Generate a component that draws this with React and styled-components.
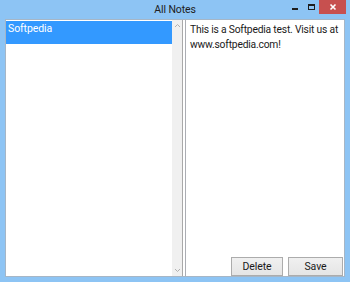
import React from "react";
import styled, { createGlobalStyle } from "styled-components";

const FONT = `Roboto, "Noto Sans", sans-serif`;

const Global = createGlobalStyle`
  html, body { margin: 0; padding: 0; }
  body { width: 350px; height: 282px; overflow: hidden; font-family: ${FONT}; }
`;

const Window = styled.div`
  width: 350px;
  height: 282px;
  box-sizing: border-box;
  background: #8dc4f4;
  display: flex;
  flex-direction: column;
  padding: 0 5px 5px 5px;
`;

const TitleBar = styled.div`
  height: 19px;
  flex: none;
  position: relative;
  display: flex;
  align-items: center;
  justify-content: center;
`;

const Title = styled.div`
  font-size: 10.5px;
  letter-spacing: -0.1px;
  color: #202020;
  line-height: 19px;
`;

const Controls = styled.div`
  position: absolute;
  right: -1px;
  top: 0;
  display: flex;
  align-items: flex-start;
  height: 14px;
`;

const CtrlBtn = styled.div`
  width: ${(p) => p.$w}px;
  height: 14px;
  display: flex;
  align-items: center;
  justify-content: center;
  background: ${(p) => p.$bg || "transparent"};
`;

const Client = styled.div`
  flex: 1;
  display: flex;
  border: 1px solid #a6b6c6;
  background: #ffffff;
  min-height: 0;
`;

const ListBox = styled.div`
  width: 177px;
  flex: none;
  display: flex;
  border-right: 1px solid #a9a9a9;
  box-sizing: border-box;
`;

const ListItems = styled.div`
  flex: 1;
  padding: 1px 0 0 0;
`;

const ListItem = styled.div`
  height: 23px;
  line-height: 15px;
  padding-left: 2px;
  font-size: 10.5px;
  letter-spacing: -0.1px;
  color: ${(p) => (p.$selected ? "#ffffff" : "#000")};
  background: ${(p) => (p.$selected ? "#3399ff" : "transparent")};
`;

const ScrollBar = styled.div`
  width: 10px;
  flex: none;
  background: #f0f0f0;
  display: flex;
  flex-direction: column;
  justify-content: space-between;
  align-items: center;
  padding: 3px 0 3px;
  box-sizing: border-box;
`;

const Gap = styled.div`
  width: 2px;
  flex: none;
`;

const EditorPane = styled.div`
  flex: 1;
  display: flex;
  flex-direction: column;
  border-left: 1px solid #abadb3;
`;

const NoteText = styled.div`
  flex: 1;
  padding: 2px 3px 2px 4px;
  font-size: 10.3px;
  letter-spacing: -0.2px;
  line-height: 15px;
  color: #1a1a1a;
`;

const ButtonRow = styled.div`
  display: flex;
  justify-content: flex-end;
  gap: 5px;
  padding: 0 1px 0 0;
`;

const Button = styled.button`
  width: ${(p) => p.$w}px;
  height: 19px;
  box-sizing: border-box;
  border: 1px solid #acacac;
  background: linear-gradient(#f0f0f0, #e5e5e5);
  font-family: ${FONT};
  font-size: 10.5px;
  letter-spacing: -0.1px;
  color: #1a1a1a;
  padding: 0;
  line-height: 16px;
`;

export default function App() {
  return (
    <>
      <Global />
      <Window>
        <TitleBar>
          <Title>All Notes</Title>
          <Controls>
            <CtrlBtn $w={16}>
              <svg width="8" height="8" viewBox="0 0 8 8">
                <rect x="1" y="5" width="6" height="2" fill="#1e1e1e" />
              </svg>
            </CtrlBtn>
            <CtrlBtn $w={16}>
              <svg width="9" height="8" viewBox="0 0 9 8">
                <rect x="1.5" y="1.5" width="6" height="5" fill="none" stroke="#1e1e1e" strokeWidth="1" />
                <rect x="1" y="1" width="7" height="2" fill="#1e1e1e" />
              </svg>
            </CtrlBtn>
            <CtrlBtn $w={27} $bg="#c7504f">
              <svg width="8" height="8" viewBox="0 0 8 8">
                <path d="M1.5 1.5 L6.5 6.5 M6.5 1.5 L1.5 6.5" stroke="#ffffff" strokeWidth="1.6" />
              </svg>
            </CtrlBtn>
          </Controls>
        </TitleBar>
        <Client>
          <ListBox>
            <ListItems>
              <ListItem $selected>Softpedia</ListItem>
            </ListItems>
            <ScrollBar>
              <svg width="7" height="5" viewBox="0 0 7 5">
                <path d="M1 4 L3.5 1.5 L6 4" stroke="#b0b0b0" fill="none" strokeWidth="1" />
              </svg>
              <svg width="7" height="5" viewBox="0 0 7 5">
                <path d="M1 1 L3.5 3.5 L6 1" stroke="#b0b0b0" fill="none" strokeWidth="1" />
              </svg>
            </ScrollBar>
          </ListBox>
          <Gap />
          <EditorPane>
            <NoteText>
              This is a Softpedia test. Visit us at www.softpedia.com!
            </NoteText>
            <ButtonRow>
              <Button $w={52}>Delete</Button>
              <Button $w={55}>Save</Button>
            </ButtonRow>
          </EditorPane>
        </Client>
      </Window>
    </>
  );
}
